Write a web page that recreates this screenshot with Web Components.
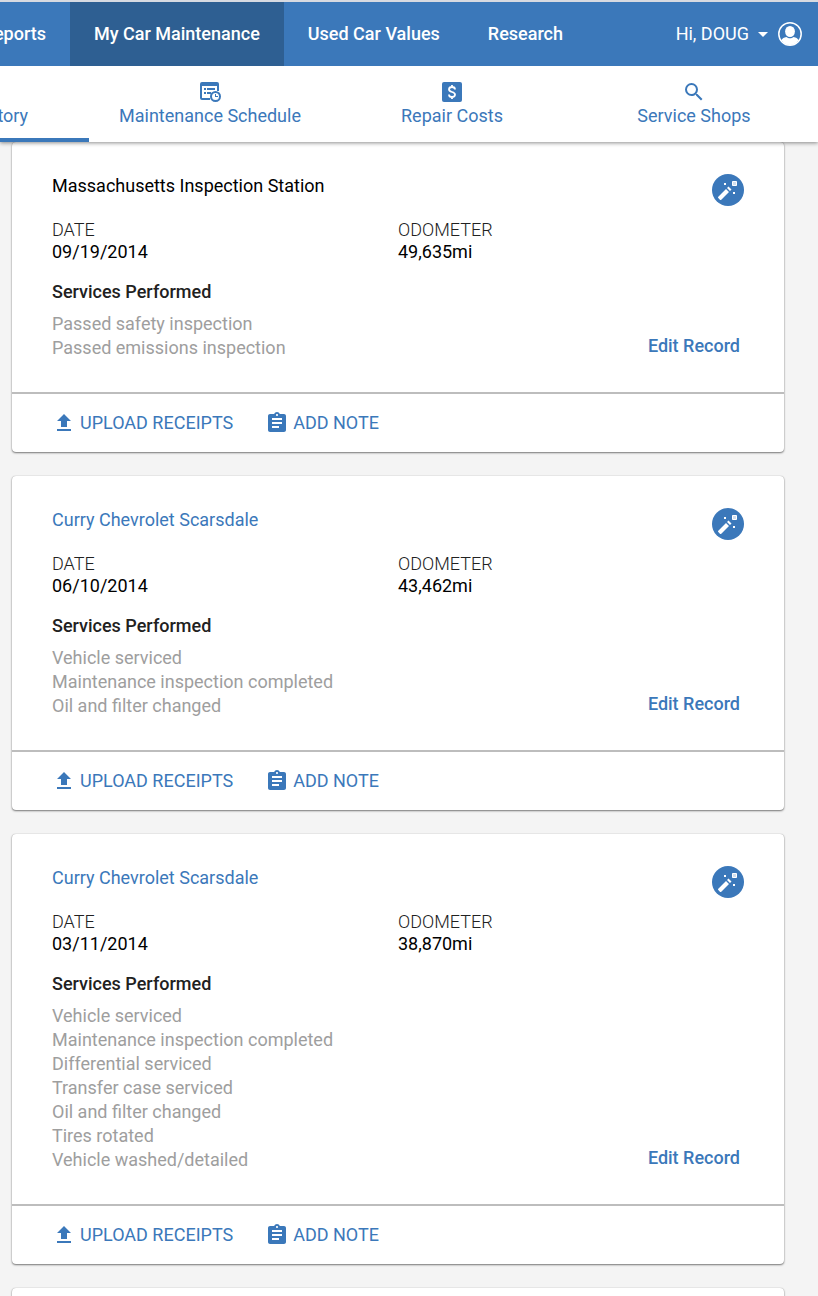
<!DOCTYPE html>
<html lang="en">
<head>
<meta charset="utf-8">
<meta name="viewport" content="width=device-width, initial-scale=1">
<title>My Car Maintenance</title>
<style>
  html, body { margin: 0; height: 100%; }
  body {
    --blue: #3b78ba;
    --blue-dark: #2e5f92;
    font: 400 18px/24px Roboto, "Liberation Sans", sans-serif;
    color: #000;
    background: #f4f4f4;
  }
</style>
</head>
<body>
<car-app>
  <site-header slot="header" user="Hi, DOUG">
    <nav-item first>Reports</nav-item>
    <nav-item active>My Car Maintenance</nav-item>
    <nav-item>Used Car Values</nav-item>
    <nav-item>Research</nav-item>
  </site-header>
  <tab-bar slot="header">
    <tab-item active icon="history">Service History</tab-item>
    <tab-item icon="schedule">Maintenance Schedule</tab-item>
    <tab-item icon="cost">Repair Costs</tab-item>
    <tab-item icon="search">Service Shops</tab-item>
  </tab-bar>
  <record-card date="09/19/2014" odometer="49,635mi">
    <span slot="shop">Massachusetts Inspection Station</span>
    <li>Passed safety inspection</li>
    <li>Passed emissions inspection</li>
  </record-card>
  <record-card date="06/10/2014" odometer="43,462mi">
    <a slot="shop" href="#shop">Curry Chevrolet Scarsdale</a>
    <li>Vehicle serviced</li>
    <li>Maintenance inspection completed</li>
    <li>Oil and filter changed</li>
  </record-card>
  <record-card date="03/11/2014" odometer="38,870mi">
    <a slot="shop" href="#shop">Curry Chevrolet Scarsdale</a>
    <li>Vehicle serviced</li>
    <li>Maintenance inspection completed</li>
    <li>Differential serviced</li>
    <li>Transfer case serviced</li>
    <li>Oil and filter changed</li>
    <li>Tires rotated</li>
    <li>Vehicle washed/detailed</li>
  </record-card>
  <card-surface></card-surface>
</car-app>

<script>
  const define = (name, html, setup) => {
    const template = document.createElement('template');
    template.innerHTML = html;
    customElements.define(name, class extends HTMLElement {
      connectedCallback() {
        if (this.shadowRoot) return;
        const root = this.attachShadow({ mode: 'open' });
        root.append(template.content.cloneNode(true));
        if (setup) setup(this, root);
      }
    });
  };

  const icons = {
    history: '<path d="M13 3a9 9 0 0 0-9 9H1l4 4 4-4H6a7 7 0 1 1 2 5l-1.400 1.400A9 9 0 1 0 13 3zm-1 5v5l4.300 2.500.700-1.200-3.500-2.100V8z"/>',
    schedule: '<path d="M4 2h15a2 2 0 0 1 2 2v7h-2V6H4v12h8v2H4a2 2 0 0 1-2-2V4a2 2 0 0 1 2-2z"/><path d="M6 8h2v2H6zM9 8h8v2H9zM6 12h2v2H6zM9 12h4v2H9z"/><path fill-rule="evenodd" d="M17.500 11a5.500 5.500 0 1 0 0 11 5.500 5.500 0 0 0 0-11zm0 2a3.500 3.500 0 1 1 0 7 3.500 3.500 0 0 1 0-7z"/><path d="M17 14h1v2h2v1h-3z"/>',
    cost: '<rect x="2" y="2" width="20" height="20" rx="2"/><path d="M15 9.500C15 7.800 13.800 7 12 7S9 8 9 9.500c0 3.200 6 1.800 6 5C15 16 13.800 17 12 17s-3-.900-3-2.600M12 5v2.500M12 16.500V19" fill="none" stroke="#fff" stroke-width="1.800"/>',
    search: '<path d="M15.500 14h-.790l-.280-.270A6.470 6.470 0 0 0 16 9.500 6.500 6.500 0 1 0 9.500 16c1.610 0 3.090-.590 4.230-1.570l.270.280v.790l5 4.990L20.490 19l-4.990-5zm-6 0C7.010 14 5 11.990 5 9.500S7.010 5 9.500 5 14 7.010 14 9.500 11.990 14 9.500 14z"/>',
    upload: '<path d="M9 16h6v-6h4l-7-7-7 7h4zm-4 2h14v2H5z"/>',
    note: '<path d="M19 3h-4.180C14.400 1.840 13.300 1 12 1s-2.400.840-2.820 2H5c-1.100 0-2 .900-2 2v14c0 1.100.900 2 2 2h14c1.100 0 2-.900 2-2V5c0-1.100-.900-2-2-2zm-7 0c.550 0 1 .450 1 1s-.450 1-1 1-1-.450-1-1 .450-1 1-1zm2 14H7v-2h7v2zm3-4H7v-2h10v2zm0-4H7V7h10v2z"/>'
  };

  define('ui-icon', `
    <style>
      :host { display: block; width: 24px; height: 24px; flex: none; }
      svg { display: block; fill: currentColor; }
    </style>
    <svg width="24" height="24" viewBox="0 0 24 24" aria-hidden="true"></svg>
  `, (host, root) => {
    root.querySelector('svg').innerHTML = icons[host.getAttribute('name')] || '';
  });

  define('car-app', `
    <style>
      :host { display: flex; flex-direction: column; height: 100vh; }
      header { position: relative; z-index: 1; flex: none; box-shadow: 0 1px 4px rgba(0, 0, 0, .45); }
      main {
        flex: 1; min-height: 0; overflow-x: hidden; overflow-y: auto; scrollbar-width: none;
        display: flex; flex-direction: column; gap: 24px;
        padding: 0 34px 24px 12px;
      }
    </style>
    <header><slot name="header"></slot></header>
    <main><slot></slot></main>
  `);

  define('site-header', `
    <style>
      :host { display: flex; height: 64px; border-top: 2px solid #d7dae1; background: var(--blue); color: #fff; }
      nav { display: flex; flex: 1; min-width: 0; }
      button {
        display: flex; align-items: center; flex: none;
        margin: 0; padding: 0 16px 0 0; border: 0; background: none;
        color: inherit; font: inherit; cursor: pointer;
      }
      .caret { margin: 0 10px 0 9px; border: 5px solid transparent; border-top-color: #fff; border-bottom: 0; }
    </style>
    <nav aria-label="Main"><slot></slot></nav>
    <button type="button">
      <span id="user"></span>
      <span class="caret"></span>
      <svg width="24" height="24" viewBox="0 0 24 24" aria-hidden="true">
        <circle cx="12" cy="12" r="11.200" fill="none" stroke="#fff" stroke-width="1.500"/>
        <ellipse cx="12" cy="9.500" rx="4.900" ry="5.500" fill="#fff"/>
        <path fill="#fff" d="M3.500 18.200c.800-1.800 2.500-2.700 4.900-3.200 2 1.800 5.200 1.800 7.200 0 2.400.500 4.100 1.400 4.900 3.200A11 11 0 0 1 12 23a11 11 0 0 1-8.500-4.800z"/>
      </svg>
    </button>
  `, (host, root) => {
    root.getElementById('user').textContent = host.getAttribute('user');
  });

  define('nav-item', `
    <style>
      :host { display: flex; flex: none; }
      :host([first]) { width: 70px; justify-content: flex-end; overflow: hidden; }
      :host([active]) { background: var(--blue-dark); }
      a { display: flex; align-items: center; flex: none; padding: 0 24px; color: inherit; font-weight: 500; text-decoration: none; white-space: nowrap; }
    </style>
    <a href="#section"><slot></slot></a>
  `);

  define('tab-bar', `
    <style>
      :host { display: block; background: #fff; color: var(--blue); overflow: hidden; }
      nav { display: flex; justify-content: flex-end; padding-right: 3px; }
    </style>
    <nav aria-label="Maintenance"><slot></slot></nav>
  `);

  define('tab-item', `
    <style>
      :host { display: block; flex: 0 0 242px; }
      a {
        display: flex; flex-direction: column; align-items: center;
        padding: 14px 0 10px; border-bottom: 4px solid transparent;
        color: inherit; text-decoration: none; white-space: nowrap;
      }
      :host([active]) a { border-color: var(--blue); }
    </style>
    <a href="#tab"><ui-icon></ui-icon><span><slot></slot></span></a>
  `, (host, root) => {
    const icon = document.createElement('ui-icon');
    icon.setAttribute('name', host.getAttribute('icon'));
    root.querySelector('ui-icon').replaceWith(icon);
  });

  define('card-surface', `
    <style>
      :host {
        display: block; flex: none; min-height: 64px; border-radius: 4px; background: #fff;
        box-shadow: 0 1px 2px rgba(0, 0, 0, .5), 0 0 1px rgba(0, 0, 0, .3);
      }
    </style>
    <slot></slot>
  `);

  define('record-card', `
    <style>
      :host { display: block; flex: none; }
      .body { padding: 32px 40px; }
      .top { display: flex; justify-content: space-between; align-items: flex-start; }
      h2 { margin: 0; font: inherit; }
      ::slotted(a) { color: var(--blue); text-decoration: none; }
      .badge { flex: none; }
      dl { display: grid; grid-template-columns: 1fr 1fr; margin: 13px 0 17px; line-height: 22px; }
      dt { font-weight: 300; color: #212121; }
      dd { margin: 0; }
      h3 { margin: 0 0 8px; font: inherit; font-weight: 500; color: #212121; }
      .work { display: flex; justify-content: space-between; align-items: flex-end; }
      ul { margin: 0; padding: 0; list-style: none; color: #9e9e9e; }
      button {
        display: flex; align-items: center; gap: 4px; margin: 0; padding: 0;
        border: 0; background: none; color: var(--blue); font: inherit; cursor: pointer;
      }
      .edit { padding: 2px 4px; font-weight: 500; }
      .actions {
        display: flex; align-items: center; gap: 32px; min-height: 58px;
        padding: 0 40px; border-top: 2px solid #bdbdbd;
      }
    </style>
    <card-surface>
      <div class="body">
        <div class="top">
          <h2><slot name="shop"></slot></h2>
          <svg class="badge" width="32" height="32" viewBox="0 0 32 32" aria-hidden="true">
            <circle cx="16" cy="16" r="16" fill="#3b78ba"/>
            <path fill="#fff" d="M6.300 22.700l7.700-7.700 3 3-7.700 7.700a1 1 0 0 1-1.400 0l-1.600-1.600a1 1 0 0 1 0-1.400zM15 14l1.500-1.500 3 3L18 17zM12 9h2v2h-2zM21 18h2v2h-2z"/>
            <path fill="#d3e0ef" stroke="#fff" d="M20.500 7.500h4v4h-4z"/>
          </svg>
        </div>
        <dl>
          <div><dt>DATE</dt><dd id="date"></dd></div>
          <div><dt>ODOMETER</dt><dd id="odometer"></dd></div>
        </dl>
        <h3>Services Performed</h3>
        <div class="work">
          <ul><slot></slot></ul>
          <button class="edit" type="button">Edit Record</button>
        </div>
      </div>
      <div class="actions">
        <button type="button"><ui-icon name="upload"></ui-icon>UPLOAD RECEIPTS</button>
        <button type="button"><ui-icon name="note"></ui-icon>ADD NOTE</button>
      </div>
    </card-surface>
  `, (host, root) => {
    for (const key of ['date', 'odometer']) root.getElementById(key).textContent = host.getAttribute(key);
  });
</script>
</body>
</html>
